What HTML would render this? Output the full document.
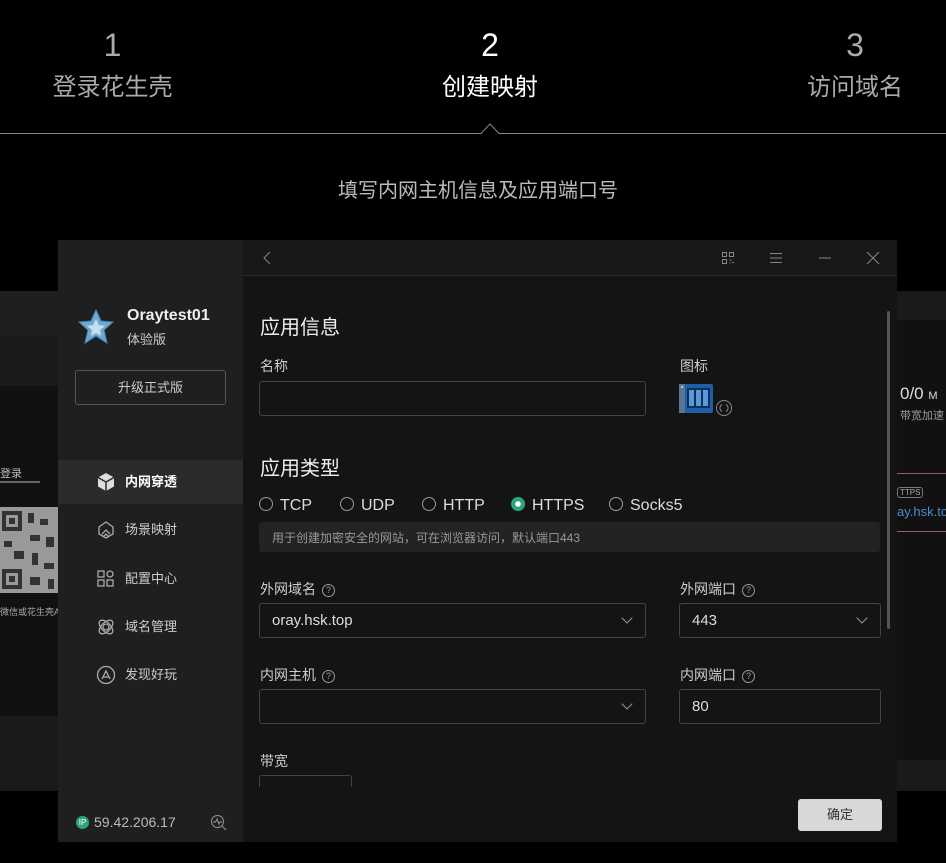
<!DOCTYPE html>
<html><head><meta charset="utf-8"><style>
*{margin:0;padding:0;box-sizing:border-box}
body{width:946px;height:863px;background:#000;position:relative;overflow:hidden;font-family:"Liberation Sans","Noto Sans CJK SC",sans-serif;color:#ddd}
.a{position:absolute}
.step{position:absolute;text-align:center;color:#aaa}
.step .n{font-size:32px;line-height:36px}
.step .t{font-size:24px;line-height:30px;margin-top:10px}
.lbl{position:absolute;font-size:14px;color:#ccc}
.inp{position:absolute;border:1px solid #444;border-radius:3px;height:35px;font-size:15px;color:#ddd;padding:8px 12px}
.chev{position:absolute;right:14px;top:10px;width:8px;height:8px;border-right:1px solid #999;border-bottom:1px solid #999;transform:rotate(45deg)}
.q{display:inline-block;width:13px;height:13px;border:1px solid #999;border-radius:50%;font-size:9px;line-height:11px;text-align:center;color:#999;margin-left:6px;vertical-align:1px}
.nav{position:absolute;left:58px;width:185px;height:44px;font-size:13px;color:#ccc;padding-left:67px;line-height:44px}
.nav svg{position:absolute;left:38px;top:12px}
.rad{position:absolute;top:497px;font-size:16px;color:#ddd}
.rad i{display:inline-block;width:14px;height:14px;border:1px solid #999;border-radius:50%;vertical-align:-1px;margin-right:7px}
</style></head><body>
<div class="step" style="left:40px;width:145px;top:27px"><div class="n">1</div><div class="t">登录花生壳</div></div>
<div class="step" style="left:420px;width:140px;top:27px;color:#fff"><div class="n">2</div><div class="t">创建映射</div></div>
<div class="step" style="left:795px;width:120px;top:27px"><div class="n">3</div><div class="t">访问域名</div></div>
<svg class="a" style="left:0;top:120px" width="946" height="16"><path d="M0 13.5H481L490 4L499 13.5H946" stroke="#888" fill="none"/></svg>
<div class="a" style="left:0;width:956px;top:174px;text-align:center;font-size:20px;color:#bbb">填写内网主机信息及应用端口号</div>

<!-- background app -->
<div class="a" style="left:0;top:291px;width:946px;height:500px;background:#1a1a1a"></div>
<div class="a" style="left:0;top:291px;width:60px;height:45px;background:#1f1f1f"></div>
<div class="a" style="left:0;top:386px;width:60px;height:330px;background:#111"></div>
<div class="a" style="left:0;top:465px;font-size:11px;color:#bbb">登录</div>
<div class="a" style="left:0;top:481px;width:40px;height:2px;background:#666"></div>
<svg class="a" style="left:0;top:507px" width="58" height="86"><rect width="58" height="86" fill="#999"/><g fill="#333"><rect x="2" y="4" width="20" height="20"/><rect x="2" y="62" width="20" height="20"/><rect x="28" y="6" width="6" height="10"/><rect x="40" y="12" width="8" height="6"/><rect x="30" y="28" width="10" height="6"/><rect x="46" y="30" width="8" height="10"/><rect x="4" y="34" width="8" height="6"/><rect x="14" y="44" width="10" height="8"/><rect x="32" y="46" width="6" height="12"/><rect x="44" y="56" width="10" height="6"/><rect x="30" y="70" width="10" height="8"/><rect x="48" y="72" width="6" height="10"/></g><g fill="#999"><rect x="6" y="8" width="12" height="12"/><rect x="6" y="66" width="12" height="12"/></g><g fill="#333"><rect x="9" y="11" width="6" height="6"/><rect x="9" y="69" width="6" height="6"/></g></svg>
<div class="a" style="left:0;top:605px;font-size:9px;color:#aaa;white-space:nowrap">微信或花生壳APP</div>
<div class="a" style="left:897px;top:320px;width:49px;height:440px;background:#111"></div>
<div class="a" style="left:900px;top:384px;font-size:17px;color:#ddd;white-space:nowrap">0/0 <span style="font-size:11px">M</span></div>
<div class="a" style="left:900px;top:407px;font-size:11px;color:#999;white-space:nowrap">带宽加速</div>
<div class="a" style="left:897px;top:473px;width:49px;height:1px;background:#a55"></div>
<div class="a" style="left:897px;top:487px;font-size:8px;color:#aaa;border:1px solid #777;border-radius:3px;padding:0 2px">TTPS</div>
<div class="a" style="left:897px;top:504px;font-size:13px;color:#4a8ccf;white-space:nowrap">ay.hsk.top</div>
<div class="a" style="left:897px;top:531px;width:49px;height:1px;background:#a55"></div>

<!-- window -->
<div class="a" style="left:58px;top:240px;width:185px;height:602px;background:#1f1f1f"></div>
<div class="a" style="left:243px;top:240px;width:654px;height:602px;background:#141414"></div>
<div class="a" style="left:243px;top:240px;width:654px;height:36px;background:#181818;border-bottom:1px solid #2a2a2a"></div>
<svg class="a" style="left:260px;top:250px" width="14" height="16"><path d="M10 2L4 8L10 14" stroke="#888" fill="none"/></svg>
<svg class="a" style="left:720px;top:250px" width="16" height="16" fill="none" stroke="#888"><rect x="2.5" y="2.5" width="4" height="4"/><rect x="9.5" y="2.5" width="4" height="4"/><rect x="2.5" y="9.5" width="4" height="4"/><path d="M9.5 10h2M12 12.5h2M9.5 13h1"/></svg>
<svg class="a" style="left:768px;top:250px" width="16" height="16" stroke="#888"><path d="M2 3.5h12M2 8h12M2 12.5h12"/></svg>
<svg class="a" style="left:817px;top:250px" width="16" height="16" stroke="#888"><path d="M2 8h12"/></svg>
<svg class="a" style="left:865px;top:250px" width="16" height="16" stroke="#888"><path d="M2 2L14 14M14 2L2 14"/></svg>
<div class="a" style="left:887px;top:311px;width:3px;height:318px;background:#555;border-radius:2px"></div>

<svg class="a" style="left:78px;top:309px" width="36" height="36"><path d="M18 1L23 12L35 13L26 21L29 34L18 27L7 34L10 21L1 13L13 12Z" fill="#6fa8d2" stroke="#4a86b5"/><path d="M18 10L21 16L27 17L22 21L23 27L18 24L13 27L14 21L9 17L15 16Z" fill="#c4def0"/></svg>
<div class="a" style="left:127px;top:307px;font-size:16px;color:#eee;font-weight:bold">Oraytest01</div>
<div class="a" style="left:127px;top:329px;font-size:13px;color:#ccc">体验版</div>
<div class="a" style="left:75px;top:370px;width:151px;height:35px;border:1px solid #555;border-radius:3px;font-size:13px;color:#ccc;text-align:center;line-height:33px">升级正式版</div>

<div class="nav" style="top:460px;background:#2b2b2b;color:#fff;font-weight:bold"><svg width="20" height="20"><path d="M10 1L18 5.5V14.5L10 19L2 14.5V5.5Z" fill="#ddd"/><path d="M2 5.5L10 10L18 5.5M10 10V19" stroke="#2b2b2b" stroke-width="1.5" fill="none"/></svg>内网穿透</div>
<div class="nav" style="top:508px"><svg width="20" height="20" fill="none" stroke="#aaa" stroke-width="1.3"><path d="M10 2L17 7V14L10 18L3 14V7Z"/><path d="M6 14L10 10L14 14M7 17L10 14L13 17"/></svg>场景映射</div>
<div class="nav" style="top:557px"><svg width="20" height="20" fill="none" stroke="#aaa" stroke-width="1.3"><rect x="2" y="2" width="6" height="6"/><circle cx="14" cy="5" r="3"/><rect x="2" y="11" width="6" height="6"/><rect x="11" y="11" width="6" height="6"/></svg>配置中心</div>
<div class="nav" style="top:605px"><svg width="20" height="20" fill="none" stroke="#aaa" stroke-width="1.3"><ellipse cx="10" cy="10" rx="8.5" ry="4.5" transform="rotate(45 10 10)"/><ellipse cx="10" cy="10" rx="8.5" ry="4.5" transform="rotate(-45 10 10)"/><circle cx="10" cy="10" r="3"/></svg>域名管理</div>
<div class="nav" style="top:653px"><svg width="20" height="20" fill="none" stroke="#aaa" stroke-width="1.3"><circle cx="10" cy="10" r="8.5"/><path d="M6 14L10 6L14 14M7.5 12H12.5"/></svg>发现好玩</div>

<div class="a" style="left:76px;top:816px;width:13px;height:13px;border-radius:50%;background:#2aa57f;font-size:8px;color:#fff;text-align:center;line-height:13px">IP</div>
<div class="a" style="left:94px;top:814px;font-size:14px;color:#bbb">59.42.206.17</div>
<svg class="a" style="left:210px;top:814px" width="17" height="17" fill="none" stroke="#888" stroke-width="1.2"><circle cx="7.5" cy="7.5" r="6"/><path d="M12 12L16 16M3 8H5.5L7 5L9 10L10 8H12"/></svg>

<div class="a" style="left:260px;top:311px;font-size:20px;color:#eee">应用信息</div>
<div class="lbl" style="left:260px;top:356px">名称</div>
<div class="inp" style="left:259px;top:381px;width:387px"></div>
<div class="lbl" style="left:680px;top:356px">图标</div>
<svg class="a" style="left:678px;top:383px" width="56" height="34"><rect x="1" y="1" width="34" height="29" rx="2" fill="#1d5ea8"/><rect x="1" y="1" width="6" height="29" fill="#5a7594"/><circle cx="4" cy="4" r="1" fill="#ddd"/><rect x="9" y="5" width="23" height="20" fill="#0d2f5a"/><rect x="11" y="7" width="5" height="16" fill="#5b9ad8"/><rect x="18" y="7" width="5" height="16" fill="#5b9ad8"/><rect x="25" y="7" width="5" height="16" fill="#5b9ad8"/><circle cx="46" cy="25" r="7.5" fill="none" stroke="#888"/><path d="M44 21.5A4 4 0 0 0 44 28.5M48 21.5A4 4 0 0 1 48 28.5" stroke="#888" fill="none"/></svg>

<div class="a" style="left:260px;top:452px;font-size:20px;color:#eee">应用类型</div>
<div class="rad" style="left:259px"><i></i>TCP</div>
<div class="rad" style="left:340px"><i></i>UDP</div>
<div class="rad" style="left:422px"><i></i>HTTP</div>
<div class="rad" style="left:511px"><i style="border-color:#2aa57f;background:radial-gradient(#fff 0 2.5px,#2aa57f 3px)"></i>HTTPS</div>
<div class="rad" style="left:609px"><i></i>Socks5</div>
<div class="a" style="left:259px;top:522px;width:621px;height:30px;background:#232323;border-radius:3px;font-size:12px;color:#999;padding:7px 13px">用于创建加密安全的网站，可在浏览器访问，默认端口443</div>

<div class="lbl" style="left:260px;top:579px">外网域名<span class="q">?</span></div>
<div class="inp" style="left:259px;top:603px;width:387px">oray.hsk.top<span class="chev"></span></div>
<div class="lbl" style="left:680px;top:579px">外网端口<span class="q">?</span></div>
<div class="inp" style="left:679px;top:603px;width:202px">443<span class="chev"></span></div>
<div class="lbl" style="left:260px;top:665px">内网主机<span class="q">?</span></div>
<div class="inp" style="left:259px;top:689px;width:387px"><span class="chev"></span></div>
<div class="lbl" style="left:680px;top:665px">内网端口<span class="q">?</span></div>
<div class="inp" style="left:679px;top:689px;width:202px">80</div>
<div class="lbl" style="left:260px;top:751px">带宽</div>
<div class="a" style="left:259px;top:775px;width:93px;height:12px;border:1px solid #444;border-bottom:none;border-radius:3px 3px 0 0"></div>
<div class="a" style="left:243px;top:787px;width:645px;height:55px;background:#141414"></div>
<div class="a" style="left:798px;top:799px;width:84px;height:32px;background:#d8d8d8;border-radius:3px;font-size:13px;color:#333;text-align:center;line-height:32px">确定</div>
</body></html>
